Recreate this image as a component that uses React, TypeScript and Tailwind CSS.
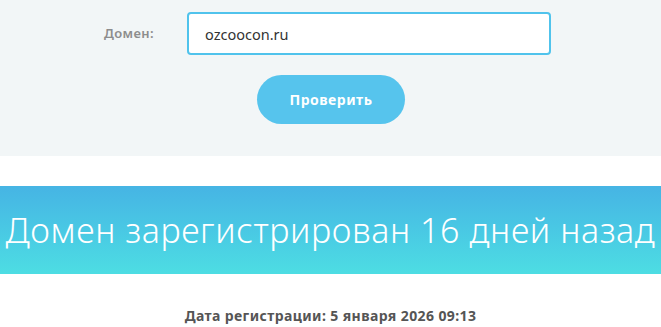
import React, { useState } from 'react';

const App = () => {
  const [domain, setDomain] = useState('ozcoocon.ru');

  return (
    <div className="h-[327px] w-full overflow-hidden bg-white" style={{ fontFamily: '"Noto Sans", "DejaVu Sans", sans-serif' }}>
      <div className="h-[156px] bg-[#f2f6f7] pt-3">
        <div className="flex items-center">
          <label className="w-[187px] pr-[33px] text-right text-[13px] font-semibold tracking-[0.4px] text-[#8d8d8d]">Домен:</label>
          <input
            value={domain}
            onChange={(e) => setDomain(e.target.value)}
            className="h-[43px] w-[364px] rounded-[4px] border-2 border-[#50c3ec] bg-white pl-[16px] text-[14.5px] text-[#333] outline-none"
          />
        </div>
        <div className="mt-5 flex justify-start pl-[257px]">
          <button className="h-[49px] w-[148px] rounded-full bg-[#56c4ed] text-[14px] font-bold tracking-[0.5px] text-white">
            Проверить
          </button>
        </div>
      </div>

      <div className="mt-[30px] flex h-[88px] items-center justify-center bg-gradient-to-b from-[#46b4e4] to-[#4ddde3]">
        <h1 className="whitespace-nowrap text-[34px] font-light tracking-[0.6px] text-white">
          Домен зарегистрирован 16 дней назад
        </h1>
      </div>

      <div className="pt-[33px] text-center">
        <p className="text-[14px] leading-[18px] font-bold tracking-[0.4px] text-[#555]">Дата регистрации: 5 января 2026 09:13</p>
      </div>
    </div>
  );
};

export default App;
